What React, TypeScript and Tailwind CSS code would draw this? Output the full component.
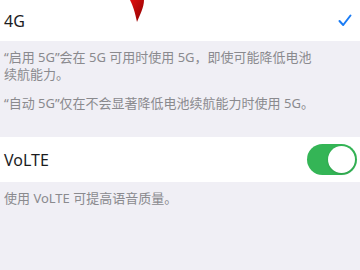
export default function App() {
  const font = { fontFamily: '"Noto Sans", "Noto Sans CJK SC", sans-serif' };
  return (
    <div className="relative w-[360px] h-[270px] overflow-hidden bg-[#f0eff5]" style={font}>
      {/* red annotation stroke over the top */}
      <svg className="absolute left-[126px] top-0" width="24" height="26" viewBox="0 0 24 26">
        <defs>
          <linearGradient id="rd" x1="0" y1="0" x2="1" y2="1">
            <stop offset="0" stopColor="#e01010" />
            <stop offset="1" stopColor="#8a0000" />
          </linearGradient>
        </defs>
        <path d="M4 0 C7 6 9 12 11 22 C14 15 18 7 18 0 Z" fill="url(#rd)" />
      </svg>

      <div className="h-[41px] bg-white flex items-center justify-between pl-1 pr-[8px]">
        <span className="text-[16px] text-[#1c1c1e]">4G</span>
        <svg width="14" height="13" viewBox="0 0 14 13">
          <path d="M1.5 7 L5.2 11 L12.5 1.5" fill="none" stroke="#1a7cf5" strokeWidth="2" strokeLinecap="round" strokeLinejoin="round" />
        </svg>
      </div>

      <div className="pt-2 pb-[25px] pl-1 pr-[40px] text-[13px] leading-[17px] text-[#8a8a8e]">
        <p>“启用 5G”会在 5G 可用时使用 5G，即使可能降低电池续航能力。</p>
        <p className="mt-3">“自动 5G”仅在不会显著降低电池续航能力时使用 5G。</p>
      </div>

      <div className="h-[45px] bg-white flex items-center justify-between pl-1 pr-[3px]">
        <span className="text-[16px] text-[#1c1c1e]">VoLTE</span>
        <div className="w-[50px] h-[31px] rounded-full bg-[#34b556] flex items-center justify-end p-[2px]">
          <div className="w-[27px] h-[27px] rounded-full bg-white shadow" />
        </div>
      </div>

      <div className="pt-2 pl-1 text-[13px] leading-[17px] text-[#8a8a8e]">
        <p>使用 VoLTE 可提高语音质量。</p>
      </div>
    </div>
  );
}
